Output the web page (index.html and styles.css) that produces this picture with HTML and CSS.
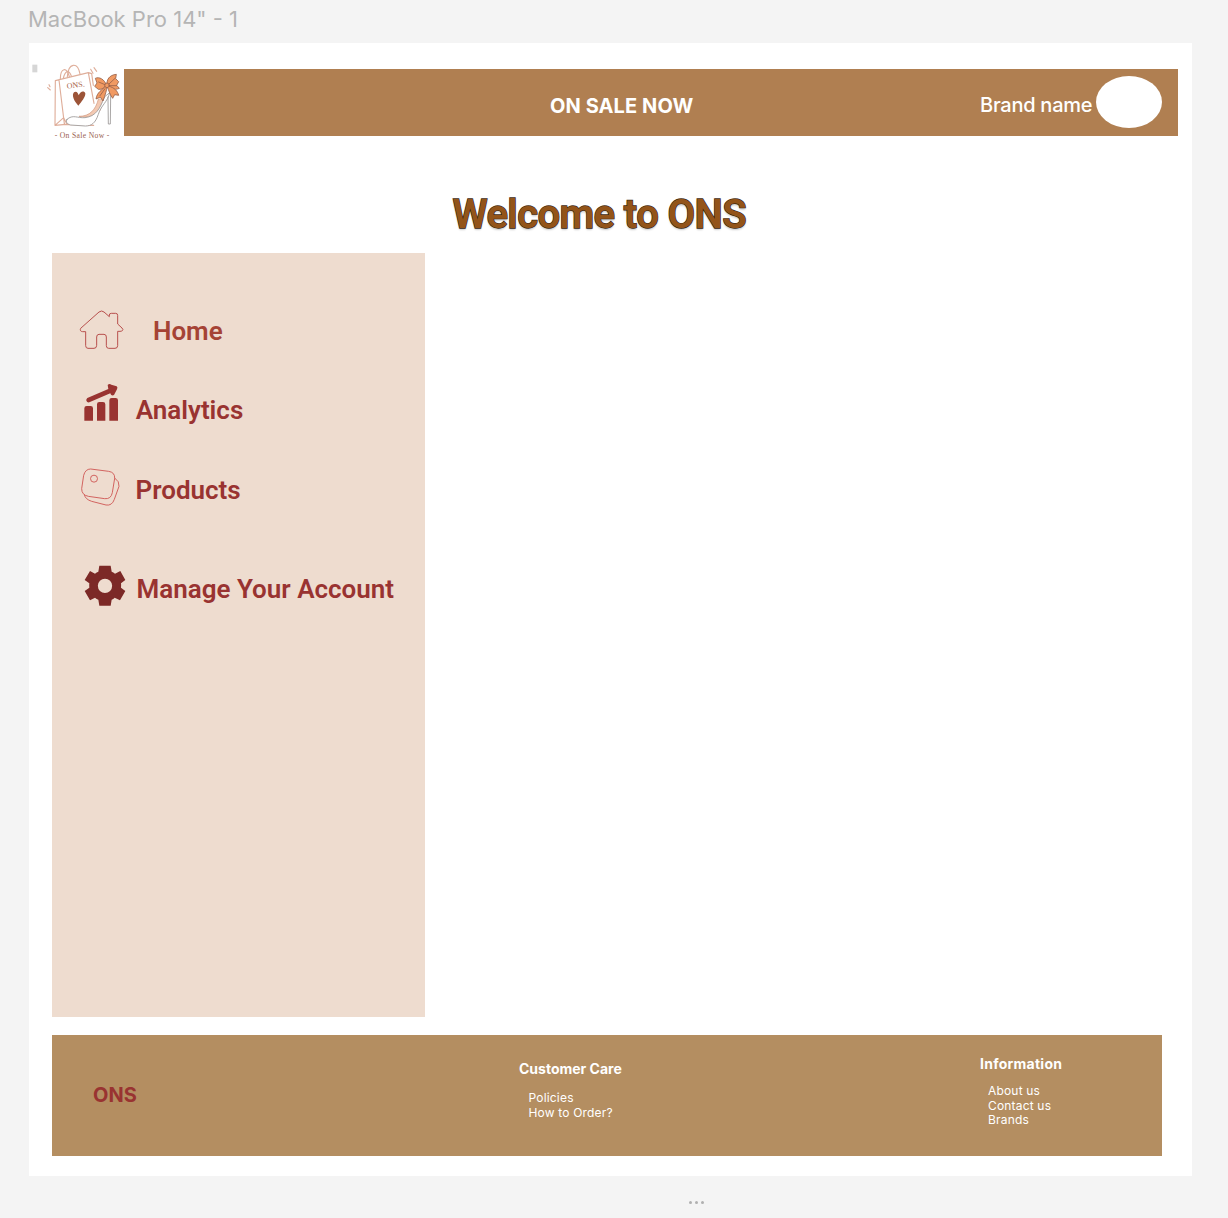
FILE: index.html
```html
<!DOCTYPE html>
<html lang="en">
<head>
<meta charset="utf-8">
<title>On Sale Now</title>
<link rel="stylesheet" href="styles.css">
</head>
<body>
<div class="frame-title">MacBook Pro 14" - 1</div>
<main class="frame">
  <header class="header">
    <svg class="logo" viewBox="0 0 330 270" fill="none" stroke-linecap="round" stroke-linejoin="round">
      <rect x="22" y="29" width="15" height="23" fill="#d6d6d6"/>
      <g stroke="#dfae9a" stroke-width="3.4">
        <path d="M91 77 L190 53 L207 145 M91 77 L90 211 L122 208 M102 75 L118 206 M90 211 L116 188 L126 208 M122 208 L206 211 M190 53 L200 56 L205 91"/>
        <path d="M106 72 C106 38 126 34 133 65 M127 65 C130 22 158 20 165 57 M115 70 C120 48 131 42 139 63"/>
        <path d="M197 43 L204 55 M207 38 L215 49 M68 98 L76 105 M72 89 L75 95"/>
      </g>
      <path d="M160 152 C147 139 139 120 147 112 C154 106 160 114 161 121 C166 107 178 106 181 115 C182 126 169 141 160 152Z" fill="#9c5438"/>
      <path d="M220 133 C212 164 195 184 162 184 C184 190 211 184 226 165 L235 134Z" fill="#f3c9b2" stroke="#cf967b" stroke-width="2"/>
      <path d="M126 193 C144 177 157 190 180 188 C213 184 225 161 238 126 L254 113 C248 141 228 151 220 178 C211 205 199 213 181 213 L137 210 C126 207 121 201 126 193Z M249 126 L250 207 L256 207 L257 121" fill="#fff" stroke="#9c9998" stroke-width="2.6"/>
      <g fill="#f19a62" stroke="#98624a" stroke-width="2.5">
        <path d="M244 90 C239 73 222 64 211 70 L216 84 L209 94 L220 103 C232 104 239 99 244 90Z"/>
        <path d="M246 90 C244 74 253 60 274 58 L272 71 L281 80 L275 91 L283 100 C267 107 254 101 246 90Z"/>
        <path d="M241 94 C231 106 216 111 213 132 L226 126 L234 138 C241 119 245 106 246 96Z"/>
        <path d="M247 96 C252 107 255 120 263 130 L269 119 L281 121 C278 108 268 98 253 94Z"/>
        <circle cx="246" cy="91" r="7"/>
        <path d="M221 81 L240 89 M270 70 L252 87 M275 92 L254 92 M225 122 L240 101"/>
      </g>
      <text class="logo-mark" x="126" y="101" transform="rotate(-7 126 101)" textLength="54">ONS.</text>
      <text class="logo-name" x="89" y="250" textLength="164">- On Sale Now -</text>
    </svg>
    <div class="bar">
      <span class="site-name">ON SALE NOW</span>
      <span class="brand">Brand name</span>
      <span class="avatar"></span>
    </div>
  </header>
  <h1 class="welcome">Welcome to ONS</h1>
  <nav class="sidebar">
    <a class="item home">
      <svg viewBox="0 0 180 180" fill="none" stroke="#b8504d" stroke-width="3" stroke-linejoin="round"><path d="M32 100 L87 51 Q95 45 102 51 L118 65 V60 Q118 55 124 55 H137 Q143 55 143 61 V87 L156 99 Q161 104 157 107 Q155 109 150 109 H143 V152 Q143 160 135 160 H116 Q109 160 109 152 V126 Q109 118 102 118 H87 Q80 118 80 126 V151 Q80 160 72 160 H54 Q47 160 47 152 V110 H38 Q28 109 32 100Z"/></svg>
      <span>Home</span>
    </a>
    <a class="item analytics">
      <svg viewBox="0 240 180 180" fill="#993331"><path d="M43 377 V340 Q43 333 50 333 H62 Q69 333 69 340 V377Z M81 377 V328 Q81 321 88 321 H99 Q106 321 106 328 V377Z M118 377 V316 Q118 309 125 309 H137 Q144 309 144 316 V377Z"/><path d="M52 309 L115 282 L113 270 Q118 265 124 269 L140 274 Q144 277 141 283 L132 300 Q127 303 123 299 L121 295 L58 322 Q51 323 49 317 Q48 312 52 309Z"/></svg>
      <span>Analytics</span>
    </a>
    <a class="item products">
      <svg viewBox="0 0 180 180" fill="none" stroke="#d05a57" stroke-width="2.8"><path d="M62 42 L116 49 Q135 52 134 70 L127 113 Q123 133 104 131 L55 124 Q35 120 35 101 L41 61 Q46 42 62 42Z M134 69 Q149 79 147 94 L133 133 Q126 153 108 150 L65 139 Q46 133 43 119"/><circle cx="72" cy="71" r="10.5"/></svg>
      <span>Products</span>
    </a>
    <a class="item account">
      <svg viewBox="0 300 180 180" fill="#7c2927"><path fill-rule="evenodd" d="M88 332 H122 L125 350 Q130 352 135 356 L151 348 L166 375 L153 385 Q154 392 153 398 L166 408 L150 436 L134 428 Q130 432 125 434 L122 452 H88 L85 434 Q80 432 75 428 L60 436 L44 408 L58 398 Q57 392 58 385 L44 375 L60 348 L75 356 Q80 352 85 350Z M105 371 A21.5 21.5 0 1 0 105 414 A21.5 21.5 0 1 0 105 371Z"/></svg>
      <span>Manage Your Account</span>
    </a>
  </nav>
  <footer class="footer">
    <div class="footer-logo">ONS</div>
    <section class="care">
      <h2>Customer Care</h2>
      <ul><li>Policies</li><li>How to Order?</li></ul>
    </section>
    <section class="info">
      <h2>Information</h2>
      <ul><li>About us</li><li>Contact us</li><li>Brands</li></ul>
    </section>
  </footer>
</main>
<div class="more"><i></i><i></i><i></i></div>
</body>
</html>
```
FILE: styles.css
```css
* { box-sizing: border-box; }
body {
  margin: 0;
  height: 1218px;
  overflow: hidden;
  background: #f4f4f4;
  font-family: Inter, "Liberation Sans", sans-serif;
  white-space: nowrap;
}
.frame-title {
  height: 43px;
  padding: 5px 0 0 28px;
  font-size: 22px;
  line-height: 28px;
  color: #b5b5b5;
}
.frame {
  width: 1163px;
  height: 1133px;
  margin-left: 28.5px;
  background: #fff;
}
.header { display: flex; height: 102px; }
.logo { width: 110px; height: 90px; margin: 12px -15px 0 -3.5px; flex: none; }
.logo-mark { font: 24px "Liberation Serif", serif; fill: #a86348; }
.logo-name { font: 23px "Liberation Serif", serif; fill: #9b6250; }
.bar {
  display: flex;
  width: 1054px;
  height: 67px;
  margin-top: 25.5px;
  margin-left: 3.5px;
  background: #b07f51;
  color: #fff;
  z-index: 1;
}
.site-name { width: 430px; margin-left: 426.5px; padding-top: 25px; font-size: 20px; line-height: 24px; font-weight: 700; letter-spacing: .1px; }
.brand { width: 116px; padding-top: 24px; font-size: 20px; line-height: 24px; font-weight: 500; letter-spacing: -.25px; }
.avatar { width: 66px; height: 52px; margin-top: 7.8px; border-radius: 50%; background: #fff; }
.welcome {
  height: 107.5px;
  margin: 0;
  padding: 46px 0 0 424px;
  font: 600 40px/48px Roboto, sans-serif;
  letter-spacing: -.6px;
  color: #935419;
  -webkit-text-stroke: 1.3px #3d2a14;
  paint-order: stroke fill;
  text-shadow: 0 2px 2px rgba(0, 0, 0, .2);
}
.sidebar {
  display: flex;
  flex-direction: column;
  gap: 20px;
  width: 373px;
  height: 764px;
  margin-left: 23px;
  padding: 42.5px 0 0 18.5px;
  background: #eedccf;
}
.item { display: flex; height: 60px; color: #993331; font: 600 26px/32px Roboto, sans-serif; }
.item svg { width: 60px; height: 60px; flex: none; }
.item span { padding-top: 20px; }
.home span { padding-left: 23px; color: #a54335; }
.analytics span { padding: 19px 0 0 5.7px; }
.products span { padding: 19px 0 0 5.5px; }
.account { margin-top: 20px; }
.account span { padding: 18px 0 0 6.5px; }
.footer {
  display: flex;
  width: 1110.5px;
  height: 120.9px;
  margin: 18.5px 0 0 23px;
  background: #b48e61;
  color: #fff;
}
.footer-logo { width: 467.5px; padding: 48px 0 0 41.5px; font-size: 20px; line-height: 24px; font-weight: 700; color: #993331; }
.care { width: 461px; padding-top: 25px; }
.info { padding-top: 20px; }
.footer h2 { margin: 0; font-size: 14px; line-height: 17px; font-weight: 700; }
.info h2 { letter-spacing: .25px; }
.footer ul { margin: 14px 0 0; padding: 0 0 0 9.5px; list-style: none; font-size: 12px; line-height: 14.5px; letter-spacing: .18px; }
.info ul { margin-top: 12px; padding-left: 8px; }
.more { display: flex; gap: 3px; padding: 25px 0 0 688.5px; }
.more i { width: 3px; height: 3px; border-radius: 50%; background: #b0b0b0; }
```
